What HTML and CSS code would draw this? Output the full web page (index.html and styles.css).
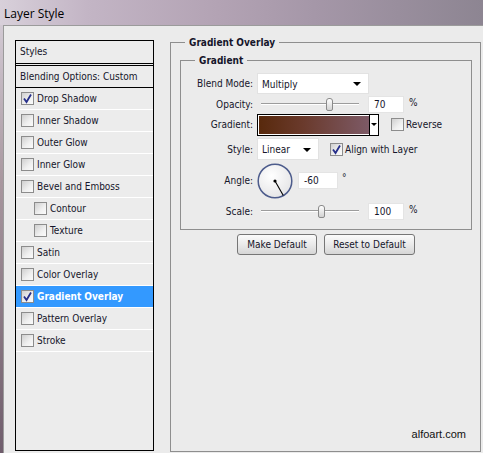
FILE: index.html
```html
<!DOCTYPE html>
<html lang="en">
<head>
  <meta charset="UTF-8" />
  <title>Layer Style</title>
  <link rel="stylesheet" href="styles.css">
</head>
<body>
  <!-- title bar -->
  <div class="titlebar">Layer Style</div>

  <div class="dialog">
    <!-- left: style list -->
    <div class="style-list">
      <div class="list-head">Styles</div>
      <div class="list-blend">Blending Options: Custom</div>
      <div class="list-row"><span class="cb checked"><svg viewBox="0 0 11 11"><path d="M2 5.5 L4.5 9 L9 1.5" fill="none" stroke="#262f8a" stroke-width="1.8"/></svg></span>Drop Shadow</div>
      <div class="list-row"><span class="cb"></span>Inner Shadow</div>
      <div class="list-row"><span class="cb"></span>Outer Glow</div>
      <div class="list-row"><span class="cb"></span>Inner Glow</div>
      <div class="list-row"><span class="cb"></span>Bevel and Emboss</div>
      <div class="list-row sub"><span class="cb"></span>Contour</div>
      <div class="list-row sub"><span class="cb"></span>Texture</div>
      <div class="list-row"><span class="cb"></span>Satin</div>
      <div class="list-row"><span class="cb"></span>Color Overlay</div>
      <div class="list-row selected"><span class="cb checked"><svg viewBox="0 0 11 11"><path d="M2 5.5 L4.5 9 L9 1.5" fill="none" stroke="#262f8a" stroke-width="1.8"/></svg></span>Gradient Overlay</div>
      <div class="list-row"><span class="cb"></span>Pattern Overlay</div>
      <div class="list-row"><span class="cb"></span>Stroke</div>
    </div>

    <!-- right: gradient overlay options -->
    <fieldset class="group outer">
      <legend>Gradient Overlay</legend>

      <fieldset class="group inner">
        <legend>Gradient</legend>
        <div class="form">
          <label>Blend Mode:</label>
          <div class="ctl">
            <div class="select blend">Multiply<span class="arrow"></span></div>
          </div>

          <label>Opacity:</label>
          <div class="ctl">
            <div class="slider"><span class="track" style="width:65px"></span><span class="thumb"></span><span class="track rest"></span></div>
            <div class="field num">70</div><span class="unit">%</span>
          </div>

          <label>Gradient:</label>
          <div class="ctl">
            <div class="grad-pick"><span class="grad"></span><span class="grad-btn"><span class="arrow small"></span></span></div>
            <span class="cb rev"></span><span class="cb-label">Reverse</span>
          </div>

          <label>Style:</label>
          <div class="ctl">
            <div class="select style">Linear<span class="arrow"></span></div>
            <span class="cb checked align"><svg viewBox="0 0 11 11"><path d="M2 5.5 L4.5 9 L9 1.5" fill="none" stroke="#262f8a" stroke-width="1.8"/></svg></span><span class="cb-label">Align with Layer</span>
          </div>

          <label>Angle:</label>
          <div class="ctl">
            <svg class="dial" viewBox="0 0 36 36" width="36" height="36">
              <defs>
                <radialGradient id="dialFill" cx="40%" cy="35%" r="70%">
                  <stop offset="0" stop-color="#ffffff"/>
                  <stop offset="1" stop-color="#e4e4e6"/>
                </radialGradient>
              </defs>
              <circle cx="18" cy="18" r="16.8" fill="url(#dialFill)" stroke="#4d5c8c" stroke-width="1.5"/>
              <line x1="18" y1="18" x2="26.3" y2="32.5" stroke="#000" stroke-width="1.1"/>
              <circle cx="18" cy="18" r="1.6" fill="#000"/>
            </svg>
            <div class="field angle">-60</div><span class="deg">&deg;</span>
          </div>

          <label>Scale:</label>
          <div class="ctl">
            <div class="slider"><span class="track" style="width:57px"></span><span class="thumb"></span><span class="track rest"></span></div>
            <div class="field num">100</div><span class="unit">%</span>
          </div>
        </div>
      </fieldset>

      <div class="buttons">
        <button class="btn make">Make Default</button>
        <button class="btn reset">Reset to Default</button>
      </div>

      <div class="credit">alfoart.com</div>
    </fieldset>
  </div>
</body>
</html>
```

FILE: styles.css
```css
/* ===== page ===== */
body{margin:0;width:483px;height:453px;overflow:hidden;
     background:linear-gradient(#d9d2dc 0%,#a8979f 40%,#6f5d6c 100%);
     font-family:"DejaVu Sans Condensed","DejaVu Sans",sans-serif;font-stretch:condensed;
     font-size:10px;color:#15152a;}

/* ===== title bar ===== */
.titlebar{height:25px;box-sizing:border-box;padding:5px 0 0 4px;
          font-family:"Open Sans","Noto Sans",sans-serif;font-stretch:normal;font-size:12px;color:#000;
          background:linear-gradient(to right,#d8d0da 0%,#c3b5c5 18%,#b3a3b4 45%,#a597a8 65%,#8d8592 100%);}

/* ===== dialog body ===== */
.dialog{display:flex;align-items:flex-start;margin-left:3px;height:428px;box-sizing:border-box;
        background:#ebebeb;border-top:1px solid #9b9b9b;border-left:1px solid #9b9b9b;
        padding:14px 0 0 11px;}

/* ----- style list ----- */
.style-list{width:139px;height:411px;box-sizing:border-box;border:1px solid #000;background:#ececec;flex:none;}
.list-head{height:22px;line-height:21px;padding-left:4px;border-bottom:3px double #000;}
.list-blend{height:21px;line-height:21px;padding-left:4px;border-bottom:1px solid #000;}
.list-row{height:22px;box-sizing:border-box;border-bottom:1px solid #fff;display:flex;align-items:center;
          padding-left:5px;gap:3px;}
.list-row.sub{padding-left:18px;}
.list-row.selected{background:#3399ff;color:#fff;font-weight:bold;}

/* checkbox */
.cb{width:13px;height:13px;box-sizing:border-box;border:1px solid #8c8c8c;flex:none;display:inline-flex;
    background:linear-gradient(135deg,#cfcfcf 0%,#f0f0f0 60%,#fbfbfb 100%);}
.cb svg{width:11px;height:11px;}
.cb-label{margin-left:2px;}

/* ----- group boxes ----- */
.group{border:1px solid #8e8e8e;margin:0;min-width:0;}
.group legend{font-weight:bold;padding:0 4px;}
.outer{width:311px;height:415px;box-sizing:border-box;margin:-3px 0 0 16px;padding:7px 8px 0 9px;
       display:flex;flex-direction:column;}
.outer > legend{margin-left:5px;}
.inner{padding:7px 0 5px 0;}
.inner > legend{margin-left:14px;}

/* ----- form grid ----- */
.form{display:grid;grid-template-columns:72px 1fr;column-gap:4px;
      grid-template-rows:21px 20px 21px 28px 35px 26px;align-items:center;}
.form label{text-align:right;}
.ctl{display:flex;align-items:center;}

.select{height:21px;box-sizing:border-box;background:#fff;border:1px solid #e2e2e2;display:flex;align-items:center;
        justify-content:space-between;padding:1px 7px 0 4px;}
.select.blend{width:112px;}
.select.style{width:62px;height:22px;}
.arrow{width:0;height:0;border-left:4px solid transparent;border-right:4px solid transparent;border-top:4px solid #000;}
.arrow.small{border-left-width:3px;border-right-width:3px;border-top-width:3px;}

.slider{width:106px;padding:0 4px;box-sizing:border-box;display:flex;align-items:center;}
.track{height:2px;box-sizing:border-box;border-top:1px solid #9c9c9c;border-bottom:1px solid #fff;flex:none;}
.track.rest{flex:1;}
.thumb{width:7px;height:13px;box-sizing:border-box;border:1px solid #8a8a8a;border-radius:3px 3px 2px 2px;flex:none;
       background:linear-gradient(#ffffff,#d2d2d2);}

.field{height:17px;box-sizing:border-box;background:#fff;border:1px solid #e4e4e4;padding:2px 0 0 5px;}
.field.num{width:36px;margin-left:5px;}
.field.angle{width:40px;margin-left:5px;}
.unit{margin-left:5px;margin-top:-3px;}
.deg{margin-left:4px;margin-top:-6px;}

.grad-pick{width:122px;height:22px;box-sizing:border-box;border:1px solid #000;display:flex;background:#fff;}
.grad{flex:1;margin:1px 0 1px 1px;background:linear-gradient(to right,#58290c 0%,#6a3a2c 40%,#7d5a66 100%);}
.grad-btn{width:8px;border-left:1px solid #000;display:flex;align-items:center;justify-content:center;}
.cb.rev{margin-left:12px;}
.cb.align{margin-left:11px;}

.dial{flex:none;}

/* ----- buttons ----- */
.buttons{display:flex;justify-content:center;gap:7px;margin-top:4px;}
.btn{height:21px;font:inherit;color:#15152a;border:1px solid #767676;border-radius:3px;padding:0;
     background:linear-gradient(#fbfbfb 0%,#eaeaea 50%,#d6d6d6 100%);}
.btn.make{width:80px;}
.btn.reset{width:91px;}

.credit{margin-top:auto;align-self:flex-end;margin-right:6px;margin-bottom:11px;
        font-family:"Liberation Sans",Arial,sans-serif;font-stretch:normal;font-size:11px;color:#111;}
```
